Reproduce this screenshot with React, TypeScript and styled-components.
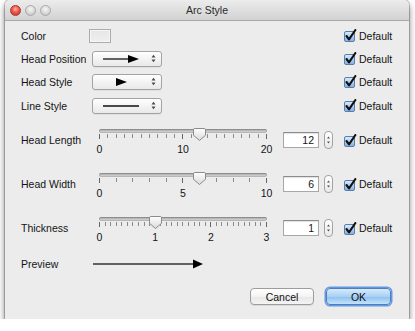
import React, { useId } from 'react';
import styled, { createGlobalStyle } from 'styled-components';

interface SliderSpec {
  label: string;
  min: number;
  max: number;
  step: number;
  majors: number[];
  value: number;
}

const sliders: SliderSpec[] = [
  { label: 'Head Length', min: 0, max: 20, step: 1, majors: [0, 10, 20], value: 12 },
  { label: 'Head Width', min: 0, max: 10, step: 1, majors: [0, 5, 10], value: 6 },
  { label: 'Thickness', min: 0, max: 3, step: 0.1, majors: [0, 1, 2, 3], value: 1 }
];

const GlobalStyle = createGlobalStyle`
  html, body {
    margin: 0;
    padding: 0;
    background: #fff;
  }

  body {
    font-family: "Liberation Sans", Arial, sans-serif;
    font-size: 10.5px;
    color: #141414;
  }
`;

const Page = styled.div`
  padding-left: 5px;
`;

const Window = styled.div`
  background: #ececec;
  border-radius: 5px 5px 0 0;
  box-shadow: 0 0 0 1px rgba(0, 0, 0, 0.2), 0 4px 7px rgba(0, 0, 0, 0.55);
  display: flex;
  flex-direction: column;
  height: 319px;
  width: 404px;
`;

const TitleBar = styled.div`
  align-items: center;
  background: linear-gradient(#ececec, #d2d2d2);
  border-bottom: 1px solid #a9a9a9;
  border-radius: 5px 5px 0 0;
  display: grid;
  grid-template-columns: 1fr auto 1fr;
  height: 20px;
`;

const Lights = styled.div`
  display: flex;
  gap: 4px;
  padding-left: 5px;
`;

const Light = styled.span<{ $red?: boolean }>`
  border-radius: 50%;
  box-sizing: border-box;
  height: 11px;
  width: 11px;
  background: ${(p) => (p.$red
    ? 'radial-gradient(circle at 50% 35%, #ffb3ac 0%, #f0574c 45%, #b8312a 100%)'
    : 'radial-gradient(circle at 50% 35%, #f6f6f6 0%, #d9d9d9 55%, #b9b9b9 100%)')};
  border: 1px solid ${(p) => (p.$red ? '#a8362f' : '#a9a9a9')};
`;

const Title = styled.div`
  color: #2a2a2a;
  font-size: 10.5px;
`;

const Content = styled.div`
  display: flex;
  flex: 1;
  flex-direction: column;
  padding: 3px 0 14px 16px;
`;

const Row = styled.div<{ $h: number }>`
  align-items: center;
  display: flex;
  height: ${(p) => p.$h}px;
`;

const Label = styled.div<{ $w: number }>`
  flex-shrink: 0;
  width: ${(p) => p.$w}px;
`;

const Spacer = styled.div`
  flex: 1;
`;

const Swatch = styled.div`
  background: linear-gradient(#e6e6e6, #efefef);
  border: 1px solid #acacac;
  box-shadow: inset 0 0 0 1px #f6f6f6;
  box-sizing: border-box;
  height: 14px;
  width: 22px;
`;

const Popup = styled.div`
  align-items: center;
  background: linear-gradient(#ffffff, #f1f1f1 60%, #e9e9e9);
  border: 1px solid #a3a3a3;
  border-radius: 3px;
  box-shadow: 0 1px 0 rgba(0, 0, 0, 0.05);
  box-sizing: border-box;
  display: flex;
  height: 16px;
  margin-left: 3px;
  padding-right: 5px;
  width: 70px;
`;

const UpDown = styled.svg`
  margin-left: auto;
`;

const DefaultCell = styled.label`
  align-items: center;
  display: flex;
  flex-shrink: 0;
  gap: 2px;
  width: 66px;
`;

const SliderBox = styled.div`
  flex-shrink: 0;
  height: 28px;
  padding: 0 7px;
  width: 168px;
`;

const TrackArea = styled.div`
  position: relative;
`;

const Track = styled.div`
  background: linear-gradient(#9d9d9d, #c9c9c9 60%, #dedede);
  border-radius: 2px;
  box-shadow: inset 0 0 0 1px rgba(0, 0, 0, 0.15);
  height: 4px;
  margin-top: 3px;
`;

const Ticks = styled.div`
  align-items: flex-start;
  display: flex;
  height: 6px;
  justify-content: space-between;
  margin-top: 1px;
`;

const Tick = styled.span<{ $major: boolean }>`
  background: ${(p) => (p.$major ? '#666' : '#8a8a8a')};
  height: ${(p) => (p.$major ? 5 : 4)}px;
  width: 1px;
`;

const ScaleLabels = styled.div`
  display: flex;
  justify-content: space-between;
  line-height: 12px;
  margin-top: 3px;
`;

const ScaleLabel = styled.span`
  display: flex;
  justify-content: center;
  white-space: nowrap;
  width: 1px;
`;

const Thumb = styled.svg`
  margin-left: -7.5px;
  position: absolute;
  top: -2px;
`;

const NumberField = styled.div`
  background: #fff;
  border: 1px solid #a8a8a8;
  border-top-color: #8c8c8c;
  box-shadow: inset 0 1px 1px rgba(0, 0, 0, 0.12);
  box-sizing: border-box;
  flex-shrink: 0;
  height: 16px;
  line-height: 14px;
  margin-left: 9px;
  padding-right: 4px;
  text-align: right;
  width: 36px;
`;

const Stepper = styled.div`
  align-items: center;
  background: linear-gradient(#ffffff, #e8e8e8);
  border: 1px solid #a3a3a3;
  border-radius: 4px;
  box-sizing: border-box;
  display: flex;
  flex-shrink: 0;
  height: 18px;
  justify-content: center;
  margin-left: 5px;
  width: 9px;
`;

const ButtonBar = styled.div`
  display: flex;
  gap: 12px;
  justify-content: flex-end;
  margin-top: auto;
  padding-right: 18px;
`;

const Button = styled.button<{ $primary?: boolean }>`
  border-radius: 4px;
  box-sizing: border-box;
  color: #111;
  font-family: inherit;
  font-size: 10.5px;
  height: 17px;
  padding: 0;
  width: ${(p) => (p.$primary ? 65 : 64)}px;
  background: ${(p) => (p.$primary
    ? 'linear-gradient(#d6eafc, #a9d0f5 50%, #8cc1f0 52%, #c4e2fb)'
    : 'linear-gradient(#ffffff, #f3f3f3 50%, #e7e7e7 52%, #f4f4f4)')};
  border: 1px solid ${(p) => (p.$primary ? '#4d7fbd' : '#9c9c9c')};
  box-shadow: ${(p) => (p.$primary
    ? '0 0 0 1.5px rgba(76, 139, 222, 0.85)'
    : '0 1px 0 rgba(0, 0, 0, 0.08)')};
`;

function Checkbox (): React.ReactElement {
  const id = useId();

  return (
    <svg height='13' viewBox='0 0 14 13' width='14'>
      <defs>
        <linearGradient id={id} x1='0' x2='0' y1='0' y2='1'>
          <stop offset='0' stopColor='#dcecfc' />
          <stop offset='1' stopColor='#7fb0e6' />
        </linearGradient>
      </defs>
      <rect fill={`url(#${id})`} height='10' rx='1.5' stroke='#5a7ea8' width='10' x='1.5' y='2.5' />
      <path d='M3.5 7 L6 10.3 L12.4 1' fill='none' stroke='#111' strokeLinecap='round' strokeLinejoin='round' strokeWidth='2.1' />
    </svg>
  );
}

function PopupArrows (): React.ReactElement {
  return (
    <UpDown height='9' viewBox='0 0 5 9' width='5'>
      <path d='M0.5 3.5 L2.5 0.8 L4.5 3.5 Z' fill='#4a4a4a' />
      <path d='M0.5 5.5 L2.5 8.2 L4.5 5.5 Z' fill='#4a4a4a' />
    </UpDown>
  );
}

function ArrowGlyph ({ head, line }: { head: boolean; line: boolean }): React.ReactElement {
  return (
    <svg height='14' viewBox='0 0 52 14' width='52'>
      {line && <line stroke='#111' strokeWidth='1.3' x1='10' x2={head ? 38 : 46} y1='7' y2='7' />}
      {head && <path d={line ? 'M35 3 L46 7 L35 11 Z' : 'M23 3 L34 7 L23 11 Z'} fill='#000' />}
    </svg>
  );
}

function DefaultBox (): React.ReactElement {
  return (
    <DefaultCell>
      <Checkbox />
      <span>Default</span>
    </DefaultCell>
  );
}

function Slider ({ majors, max, min, step, value }: SliderSpec): React.ReactElement {
  const count = Math.round((max - min) / step) + 1;
  const ticks = Array.from({ length: count }, (_, i) => min + i * step);

  return (
    <SliderBox>
      <TrackArea>
        <Track />
        <Ticks>
          {ticks.map((t, i) => (
            <Tick $major={majors.some((m) => Math.abs(m - t) < 1e-6)} key={i} />
          ))}
        </Ticks>
        <Thumb height='15' style={{ left: `${((value - min) / (max - min)) * 100}%` }} viewBox='0 0 15 15' width='15'>
          <defs>
            <linearGradient id='thumbFill' x1='0' x2='0' y1='0' y2='1'>
              <stop offset='0' stopColor='#ffffff' />
              <stop offset='1' stopColor='#d9d9d9' />
            </linearGradient>
          </defs>
          <path d='M2.8 1.5 H12.2 Q13.5 1.5 13.5 2.8 V8.3 L7.5 13.5 L1.5 8.3 V2.8 Q1.5 1.5 2.8 1.5 Z' fill='url(#thumbFill)' stroke='#8b8b8b' />
        </Thumb>
      </TrackArea>
      <ScaleLabels>
        {majors.map((m) => (
          <ScaleLabel key={m}>{m}</ScaleLabel>
        ))}
      </ScaleLabels>
    </SliderBox>
  );
}

function StepperArrows (): React.ReactElement {
  return (
    <svg height='10' viewBox='0 0 5 10' width='5'>
      <path d='M1 3.5 L2.5 1.5 L4 3.5 Z' fill='#555' />
      <path d='M1 6.5 L2.5 8.5 L4 6.5 Z' fill='#555' />
    </svg>
  );
}

function App (): React.ReactElement {
  return (
    <Page>
      <GlobalStyle />
      <Window>
        <TitleBar>
          <Lights>
            <Light $red />
            <Light />
            <Light />
          </Lights>
          <Title>Arc Style</Title>
          <div />
        </TitleBar>
        <Content>
          <Row $h={23}>
            <Label $w={68}>Color</Label>
            <Swatch />
            <Spacer />
            <DefaultBox />
          </Row>
          <Row $h={23}>
            <Label $w={68}>Head Position</Label>
            <Popup>
              <ArrowGlyph head line />
              <PopupArrows />
            </Popup>
            <Spacer />
            <DefaultBox />
          </Row>
          <Row $h={23}>
            <Label $w={68}>Head Style</Label>
            <Popup>
              <ArrowGlyph head line={false} />
              <PopupArrows />
            </Popup>
            <Spacer />
            <DefaultBox />
          </Row>
          <Row $h={25}>
            <Label $w={68}>Line Style</Label>
            <Popup>
              <ArrowGlyph head={false} line />
              <PopupArrows />
            </Popup>
            <Spacer />
            <DefaultBox />
          </Row>
          {sliders.map((s) => (
            <Row $h={44} key={s.label}>
              <Label $w={71}>{s.label}</Label>
              <Slider {...s} />
              <NumberField>{s.value}</NumberField>
              <Stepper>
                <StepperArrows />
              </Stepper>
              <Spacer />
              <DefaultBox />
            </Row>
          ))}
          <Row $h={28}>
            <Label $w={72}>Preview</Label>
            <svg height='12' viewBox='0 0 112 12' width='112'>
              <line stroke='#333' strokeWidth='1.3' x1='0' x2='102' y1='6' y2='6' />
              <path d='M100 1.5 L110 6 L100 10.5 Z' fill='#000' />
            </svg>
          </Row>
          <ButtonBar>
            <Button>Cancel</Button>
            <Button $primary>OK</Button>
          </ButtonBar>
        </Content>
      </Window>
    </Page>
  );
}

export default App;
